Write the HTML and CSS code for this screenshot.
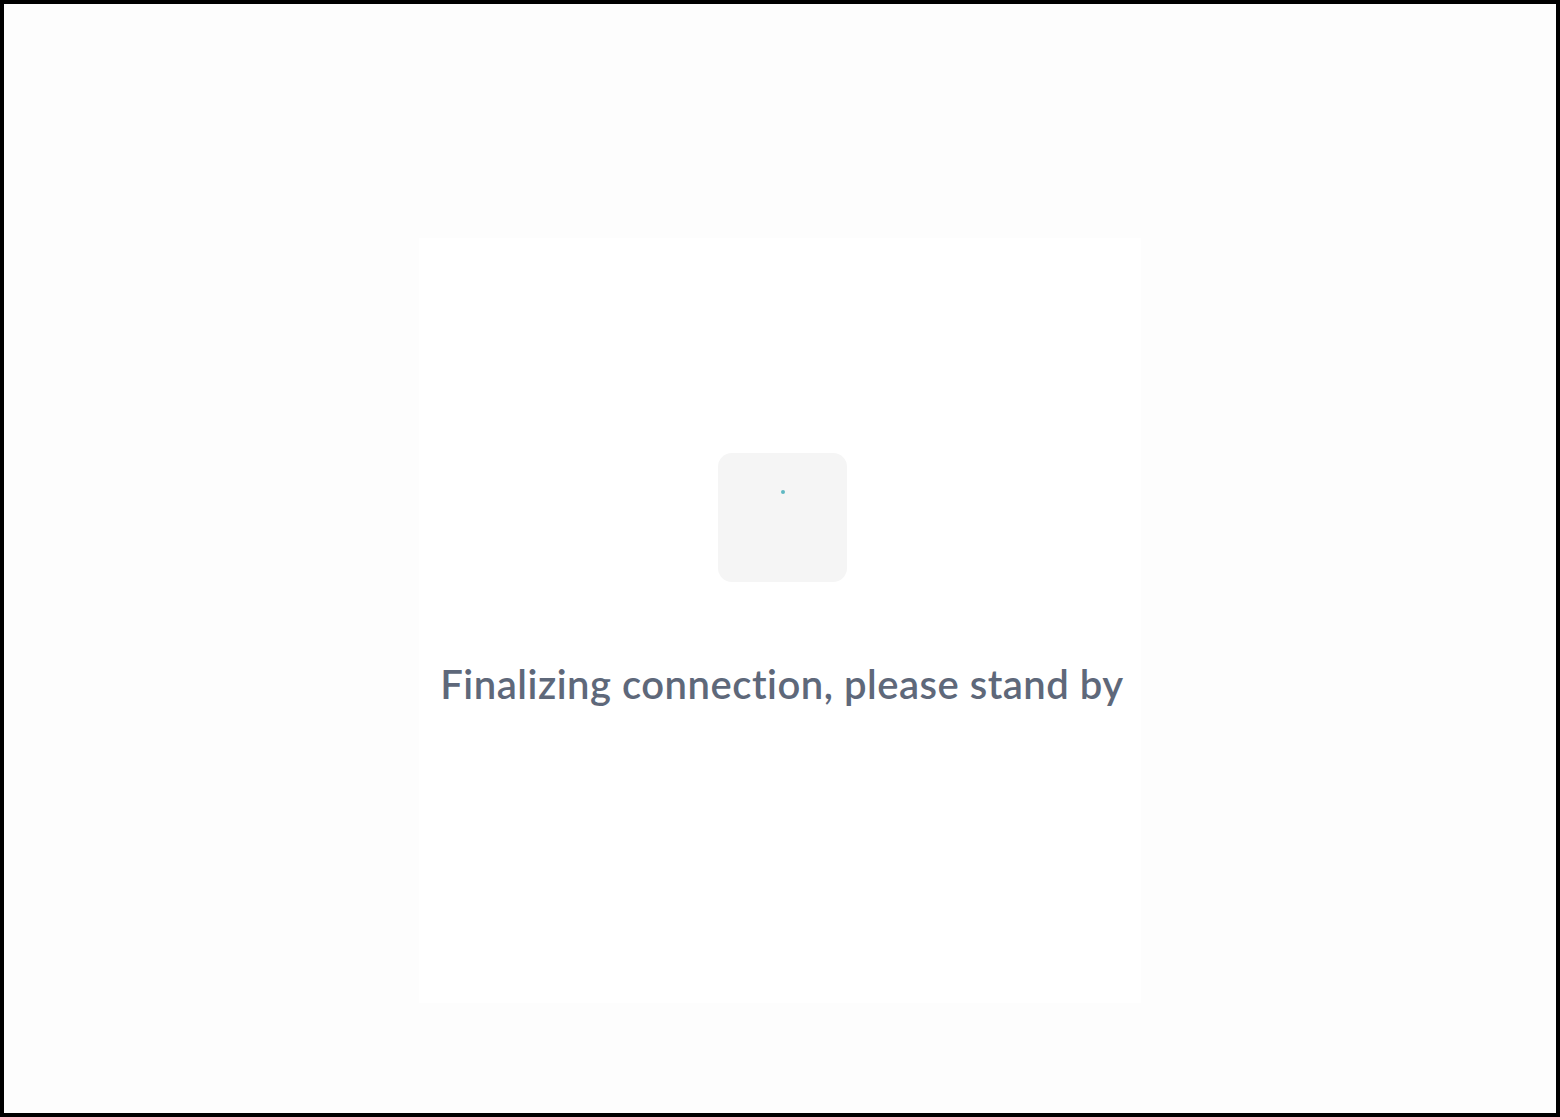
FILE: index.html
```html
<!DOCTYPE html>
<html>
<head>
<meta charset="utf-8">
<link rel="stylesheet" href="styles.css">
</head>
<body>
<div class="frame">
  <div class="card">
    <div class="loader"><span class="dot"></span></div>
    <p class="message">Finalizing connection, please stand by</p>
  </div>
</div>
</body>
</html>
```
FILE: styles.css
```css
html, body {
  margin: 0;
  padding: 0;
}
.frame {
  box-sizing: border-box;
  width: 1560px;
  height: 1117px;
  border: 4px solid #000;
  background: #fdfdfd;
  display: flex;
  align-items: flex-start;
  justify-content: center;
  padding-top: 234px;
}
.card {
  box-sizing: border-box;
  width: 722px;
  height: 765px;
  background: #fff;
  display: flex;
  flex-direction: column;
  align-items: center;
  padding-top: 215px;
  padding-left: 4px;
}
.loader {
  width: 129px;
  height: 129px;
  border-radius: 14px;
  background: #f5f5f5;
  position: relative;
}
.dot {
  position: absolute;
  left: 63px;
  top: 37px;
  width: 4px;
  height: 4px;
  border-radius: 50%;
  background: #5fb8c2;
}
.message {
  margin: 78px 0 0 0;
  font-family: "Lato", "Open Sans", sans-serif;
  font-weight: 600;
  font-size: 40px;
  letter-spacing: 0.5px;
  font-variant-ligatures: none;
  color: #5e687a;
  white-space: nowrap;
}
```
